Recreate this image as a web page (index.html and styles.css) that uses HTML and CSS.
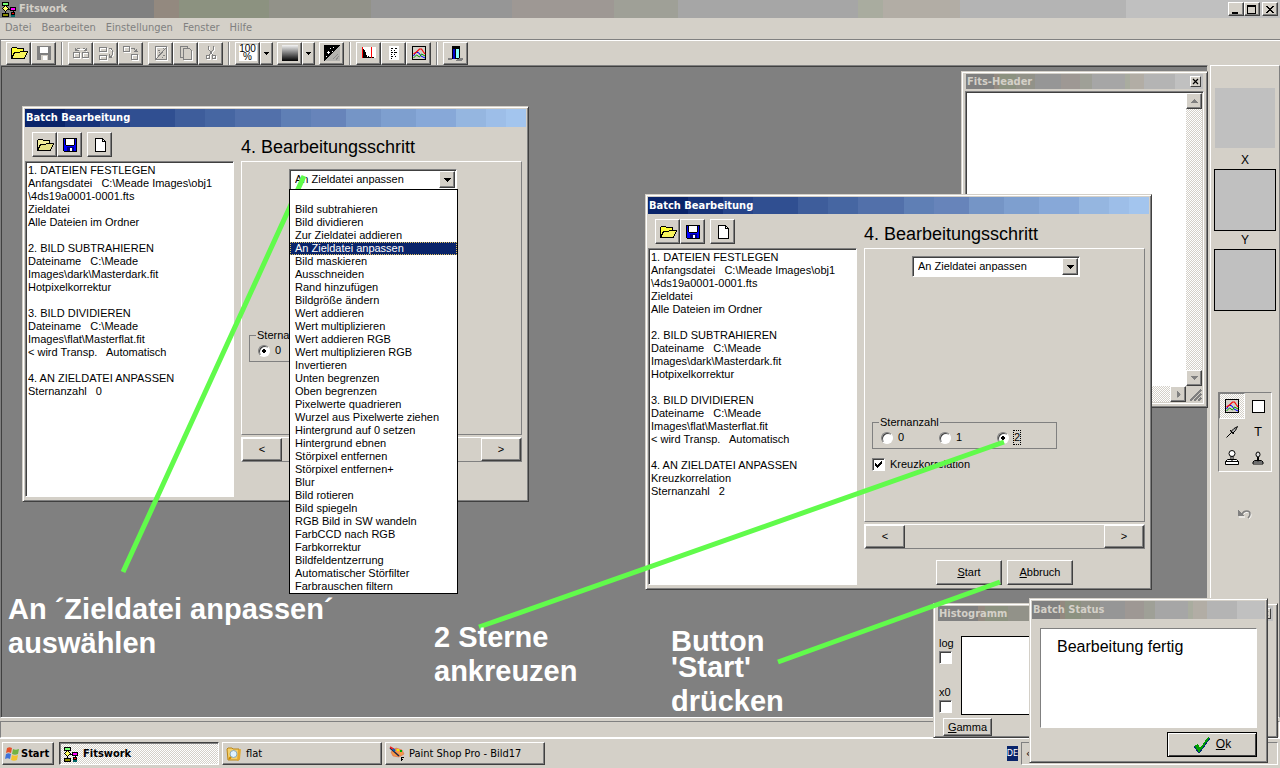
FILE: index.html
```html
<!DOCTYPE html>
<html lang="de">
<head>
<meta charset="utf-8">
<meta name="viewport" content="width=device-width, initial-scale=1">
<title>Fitswork</title>
<link rel="stylesheet" href="styles.css">
</head>
<body>
<svg class="defs" aria-hidden="true">
  <symbol id="app" viewBox="0 0 16 16">
    <path d="M4 3v10M5 8h8M12 8v6" stroke="#000" fill="none"/>
    <rect x="1.5" y="1" width="6" height="3" fill="#7f7" stroke="#000"/>
    <path d="M4.5 4.500l3 3-3 3-3-3z" fill="#ff6" stroke="#000"/>
    <rect x="1.500" y="12.500" width="6" height="3" fill="#880" stroke="#000"/>
    <rect x="9.500" y="6.500" width="5" height="3" fill="#f0f" stroke="#000"/>
    <rect x="10.500" y="11" width="3" height="2" fill="#f00" stroke="#000"/>
    <rect x="10" y="14" width="4" height="2" fill="#066"/>
  </symbol>
  <symbol id="open" viewBox="0 0 18 16">
    <path d="M1.500 13.500V3.500l1-1h4l1 1h6v3h3.500l-3 7z" fill="#ffff33" stroke="#000"/>
    <path d="M1.500 13.500l3-6h5l1-1h7l-3 7z" fill="#f8f45c" stroke="#000"/>
  </symbol>
  <symbol id="opendull" viewBox="0 0 18 16">
    <path d="M1.500 13.500V3.500l1-1h4l1 1h6v3h3.500l-3 7z" fill="#f2ee9a" stroke="#000"/>
    <path d="M1.500 13.500l3-6h5l1-1h7l-3 7z" fill="#e6e284" stroke="#000"/>
  </symbol>
  <symbol id="save" viewBox="0 0 16 16">
    <path d="M1.500 1.500h13v13h-12l-1-1z" fill="#00f" stroke="#000"/>
    <path d="M4 2h8v6H4z" fill="#fff"/><path d="M4 8.500h8M3.500 2v6M12.500 2v6" stroke="#000"/>
    <path d="M5 10h7v4H5z" fill="#000080"/><path d="M8 11h2v3H8z" fill="#fff"/>
  </symbol>
  <symbol id="savegray" viewBox="0 0 16 16">
    <path d="M1 1h14v14H1z" fill="#808080"/><path d="M4 2h8v6H4z" fill="#fff"/><path d="M5 10h7v5H5z" fill="#d4d0c8"/><path d="M7 11h4v4H7z" fill="#fff"/>
  </symbol>
  <symbol id="new" viewBox="0 0 16 16"><path d="M3.500 1.500h7l3 3v10h-10z" fill="#fff" stroke="#000"/><path d="M10.500 1.500v3h3" fill="none" stroke="#000"/></symbol>
  <symbol id="swap" viewBox="0 0 16 16"><g fill="none" stroke="#fff"><path d="M1.500 8.500h6v5h-6zM10.500 8.500h5v5h-5zM4 6l3-2h4l3 3"/></g><g fill="none" stroke="#808080"><path d="M.5 7.500h6v5h-6zM9.500 7.500h6v5h-6zM2.500 5.500l2-2h2M9.500 3.500h2l2 2M2.500 2.500v3h3M13.500 2.500v3h-3"/></g></symbol>
  <symbol id="stack" viewBox="0 0 16 16"><path d="M2.500 3.500h7v4h-7zM2.500 11.500h7v4h-7zM12 4l3 3v4l-3 2" fill="none" stroke="#fff"/><path d="M1.500 2.500h7v4h-7zM1.500 10.500h7v4h-7zM11 3.500h2l1.500 2v4l-2 2.500M11 12.500h3M11.500 12v-3" fill="none" stroke="#808080"/></symbol>
  <symbol id="move" viewBox="0 0 16 16"><path d="M1.500 2.500h6v5h-6zM9.500 10.500h6v5h-6z" fill="none" stroke="#fff"/><path d="M.5 1.500h6v5h-6zM8.500 9.500h6v5h-6zM8 3.500h3l2 3M11 6.500h4M13 4v3" fill="none" stroke="#808080"/></symbol>
  <symbol id="wand" viewBox="0 0 16 16"><path d="M3.500 2.500h11v13h-11z" fill="none" stroke="#fff"/><path d="M2.500 1.500h11v13h-11zM3 14L13 3M5 5.500h2M6 7.500h1M10 10.500h2M9 12.500h1M10 3.500h1" fill="none" stroke="#808080"/></symbol>
  <symbol id="copy" viewBox="0 0 16 16"><path d="M2.500 1.500h7v11h-7z" fill="#d4d0c8" stroke="#808080"/><path d="M6.500 4.500h6l2 2v9h-8z" fill="#d4d0c8" stroke="#fff"/><path d="M5.500 3.500h6l2 2v9h-8z" fill="#d4d0c8" stroke="#808080"/></symbol>
  <symbol id="cut" viewBox="0 0 16 16"><g fill="none" stroke="#fff" transform="translate(1 1)"><path d="M5.500 1v3l4 6M10.500 1v3l-4 6"/><circle cx="5" cy="12" r="2"/><circle cx="11" cy="12" r="2"/></g><g fill="none" stroke="#808080"><path d="M5.500 1v3l4 6M10.500 1v3l-4 6"/><circle cx="5" cy="12" r="2"/><circle cx="11" cy="12" r="2"/></g></symbol>
  <linearGradient id="ramp" x1="0" y1="0" x2="0" y2="1"><stop offset="0" stop-color="#f4f4f4"/><stop offset="1" stop-color="#000"/></linearGradient>
  <symbol id="gray" viewBox="0 0 16 16"><path d="M0 0h16v16H0z" fill="url(#ramp)"/></symbol>
  <symbol id="moon" viewBox="0 0 16 16"><path d="M0 0h16v16H0z" fill="#b4b3af"/><path d="M0 0h16L0 16z"/><path d="M9 14l5-5M12 15l3-4" stroke="#8c8c8c"/><path d="M3 7.500h3M4.500 6v3M6 3.500h1M9 2.500h1M8 6.500h1M2 11.500h1" stroke="#fff"/></symbol>
  <symbol id="histo" viewBox="0 0 16 16"><path d="M1 2h14v11H1z" fill="#fff"/><path d="M2 3v10h11v-1h-2l-1-1-1 1-2-1-1 1-1-4-1-2-1-1z"/><path d="M1.500 2v11M10.500 2v11" stroke="#f00"/></symbol>
  <symbol id="text" viewBox="0 0 16 16"><path d="M3 1h10v14H3z" fill="#fff"/><path d="M5 3.500h2m2 0h2M5 5.500h1m2 0h1M5 7.500h2m1 0h3M5 9.500h1m2 0h1M5 11.500h2m2 0h1M5 13.500h1" stroke="#000"/></symbol>
  <symbol id="curve" viewBox="0 0 16 16"><path d="M1.500 1.500h13v13h-13z" fill="#d4d0c8" stroke="#000" stroke-width="1.500"/><g fill="none" shape-rendering="geometricPrecision"><path d="M2.500 11l2.500-4 3 1 2 3 4 2" stroke="#00f"/><path d="M2.500 13l3-3 3 2 2-3 3.500 2" stroke="#090"/><path d="M2.500 9l3-2 3-3h2l2 3 1.500 2" stroke="#f00" stroke-width="1.200"/></g></symbol>
  <symbol id="exit" viewBox="0 0 16 16"><path d="M4 1h8v2H4z"/><path d="M4 3h8v11H4z"/><path d="M5 4h2v10H5z" fill="#00c"/><path d="M8 4h3v9H8z" fill="#8ff"/><path d="M0 13h4v2H0zM9 14l4-1 3 1-3 2H8z" fill="#808080"/></symbol>
  <symbol id="down" viewBox="0 0 7 4"><path d="M0 0h7v1H0zM1 1h5v1H1zM2 2h3v1H2zM3 3h1v1H3z" fill="currentColor"/></symbol>
  <symbol id="close" viewBox="0 0 8 7"><path d="M0 0h2v1h1v1h2V1h1V0h2v1H7v1H6v1H5v1h1v1h1v1h1v1H6V6H5V5H3v1H2v1H0V6h1V5h1V4h1V3H2V2H1V1H0z"/></symbol>
  <symbol id="closesmall" viewBox="0 0 7 7"><path d="M1 1l5 5M6 1L1 6" stroke="#000" stroke-width="1.200" shape-rendering="geometricPrecision"/></symbol>
  <symbol id="pen" viewBox="0 0 16 16"><g shape-rendering="geometricPrecision"><path d="M2.500 13.500l6-6" stroke="#000"/><path d="M7 7.500l3-3 2-1 1.500-1-1 2-1 2-3 3z" fill="#aaa" stroke="#000"/><path d="M6 6l4 4" stroke="#000"/></g></symbol>
  <symbol id="stamp" viewBox="0 0 16 16"><g fill="#fff" stroke="#000" shape-rendering="geometricPrecision"><path d="M7 6h2v4H7zM3.500 9.500h9l2 2v3h-13v-3z"/><circle cx="8" cy="3.500" r="3"/><path d="M1.500 11.500h13"/></g></symbol>
  <symbol id="stampsmall" viewBox="0 0 16 16"><g fill="#ddd" stroke="#000" shape-rendering="geometricPrecision"><path d="M7.500 7h1v4h-1zM4.500 10.500h7l1.500 1.500v2H3v-2z"/><ellipse cx="8" cy="4.500" rx="2" ry="2.500"/><path d="M3 12h10"/></g></symbol>
  <symbol id="undo" viewBox="0 0 16 12"><g fill="none" shape-rendering="geometricPrecision"><path d="M7 6c2-3 7-2 7 1 0 2-1 3-2 4" stroke="#fff"/><path d="M5 6c2-4 8-4 8 0 0 2-1 3-2 4" stroke="#808080" stroke-width="1.500"/><path d="M2 9h6" stroke="#fff"/></g><path d="M1 2v6h6z" fill="#808080"/></symbol>
  <symbol id="check" viewBox="0 0 9 8"><path d="M1 2v3l2 2 5-5V0L3 4z"/></symbol>
  <symbol id="flag" viewBox="0 0 16 16"><g shape-rendering="geometricPrecision"><path d="M3 2c2-1 3-1 5 0L7 7C5 6 4 6 2 7z" fill="#e4512b"/><path d="M9 3c2 1 3 1 6 0l-1 5c-2 1-4 1-6 0z" fill="#72b343"/><path d="M2 8c2-1 3-1 5 0l-1 5c-2-1-3-1-5 0z" fill="#3f72d8"/><path d="M8 9c2 1 4 1 6 0l-1 5c-2 1-4 1-6 0z" fill="#f4c32e"/></g></symbol>
  <symbol id="folder" viewBox="0 0 16 16"><g shape-rendering="geometricPrecision"><path d="M1 3l1-1h4l1 1h6v11H2z" fill="#f5d06a" stroke="#b98516"/><path d="M12 4l3-1-1 10-3 2z" fill="#e3a92f"/><circle cx="7.500" cy="8" r="3.500" fill="#dff3ff" stroke="#8ab"/><path d="M5 11l-2 2" stroke="#c80" stroke-width="2"/></g></symbol>
  <symbol id="paint" viewBox="0 0 16 16"><g shape-rendering="geometricPrecision"><path d="M2 6l5-4 6 2 2 4-5 3-6-1z" fill="#f49a4a" stroke="#d64" stroke-width=".6"/><path d="M8 3h2v2H8z" fill="#ee0"/><path d="M11 4h2v2h-2z" fill="#0a0"/><path d="M1 2l9 8" stroke="#224" stroke-width="1.500"/><path d="M1 1l5 3" stroke="#e22" stroke-width="1.500"/><path d="M4 3l2 2" stroke="#06c" stroke-width="2"/></g><path d="M12 11.500h3M12.500 11v4M12 13.500h2" fill="none" stroke="#000"/></symbol>
</svg>

<div class="desktop">
  <header class="titlebar gray main-title">
    <svg class="i16"><use href="#app"/></svg><h1>Fitswork</h1>
    <div class="caption-buttons">
      <button class="cap" aria-label="Minimieren"><svg viewBox="0 0 10 9"><path d="M1 7h6v2H1z"/></svg></button>
      <button class="cap" aria-label="Maximieren"><svg viewBox="0 0 10 9"><path d="M0 0h9v9H0zM1 2v6h7V2z" fill-rule="evenodd"/></svg></button>
      <button class="cap apart" aria-label="Schließen"><svg class="x"><use href="#close"/></svg></button>
    </div>
  </header>
  <nav class="menu"><a href="#">Datei</a><a href="#">Bearbeiten</a><a href="#">Einstellungen</a><a href="#">Fenster</a><a href="#">Hilfe</a></nav>
  <div class="toolbar">
    <button class="tool" aria-label="Öffnen"><svg class="i18"><use href="#open"/></svg></button><button class="tool" aria-label="Speichern"><svg class="i16"><use href="#savegray"/></svg></button>
    <i class="sep"></i>
    <button class="tool" aria-label="Tauschen"><svg class="i16"><use href="#swap"/></svg></button><button class="tool" aria-label="Stapeln"><svg class="i16"><use href="#stack"/></svg></button><button class="tool" aria-label="Verschieben"><svg class="i16"><use href="#move"/></svg></button>
    <i class="space wide"></i>
    <button class="tool" aria-label="Auswahl"><svg class="i16"><use href="#wand"/></svg></button><button class="tool" aria-label="Kopieren"><svg class="i16"><use href="#copy"/></svg></button><button class="tool" aria-label="Ausschneiden"><svg class="i16"><use href="#cut"/></svg></button>
    <i class="sep"></i>
    <button class="tool"><span class="percent">100<br>%</span></button><button class="tool narrow" aria-label="Zoomstufen"><svg class="tri tiny"><use href="#down"/></svg></button>
    <i class="space"></i>
    <button class="tool" aria-label="Graustufen"><svg class="i16"><use href="#gray"/></svg></button><button class="tool narrow" aria-label="Paletten"><svg class="tri tiny"><use href="#down"/></svg></button>
    <i class="space"></i>
    <button class="tool" aria-label="Kontrast"><svg class="i16"><use href="#moon"/></svg></button>
    <i class="sep"></i>
    <button class="tool" aria-label="Histogramm"><svg class="i16"><use href="#histo"/></svg></button><button class="tool" aria-label="Fits-Header"><svg class="i16"><use href="#text"/></svg></button><button class="tool" aria-label="Kurven"><svg class="i16"><use href="#curve"/></svg></button>
    <i class="sep"></i>
    <button class="tool" aria-label="Beenden"><svg class="i16"><use href="#exit"/></svg></button>
  </div>

  <main class="workspace">
    <div class="mdi"></div>
    <aside class="side">
      <div class="preview plain"></div>
      <span class="axis">X</span><div class="preview"></div>
      <span class="axis">Y</span><div class="preview"></div>
      <div class="palette">
        <button class="on" aria-label="Kurven"><svg class="i16"><use href="#curve"/></svg></button>
        <button aria-label="Rechteck"><svg class="i16" viewBox="0 0 16 16"><path d="M2.500 2.500h12v12h-12z" fill="#fff" stroke="#000"/></svg></button>
        <button aria-label="Pipette"><svg class="i16"><use href="#pen"/></svg></button>
        <button>T</button>
        <button aria-label="Stempel"><svg class="i16"><use href="#stamp"/></svg></button>
        <button aria-label="Kleiner Stempel"><svg class="i16"><use href="#stampsmall"/></svg></button>
      </div>
      <button class="undo" aria-label="Rückgängig"><svg><use href="#undo"/></svg></button>
    </aside>
  </main>
  <div class="status"><div></div></div>
  <footer class="taskbar">
    <button class="task start"><svg class="i16"><use href="#flag"/></svg><b>Start</b></button>
    <button class="task active"><svg class="i16"><use href="#app"/></svg><b>Fitswork</b></button>
    <button class="task"><svg class="i16"><use href="#folder"/></svg>flat</button>
    <button class="task"><svg class="i16"><use href="#paint"/></svg>Paint Shop Pro - Bild17</button>
    <span class="lang">DE</span><div class="tray">«</div>
  </footer>

  <section class="window fits" aria-label="Fits-Header">
    <div class="titlebar gray small"><h2>Fits-Header</h2><button class="mini" aria-label="Schließen"><svg><use href="#closesmall"/></svg></button></div>
    <div class="memo-frame">
      <div class="page"></div>
      <div class="vscroll"><button aria-label="Nach oben"><svg class="tri up"><use href="#down"/></svg></button><i></i><button aria-label="Nach unten"><svg class="tri"><use href="#down"/></svg></button></div>
      <div class="hscroll"><i></i><button aria-label="Nach rechts"><svg class="tri right"><use href="#down"/></svg></button></div>
      <svg class="grip" viewBox="0 0 16 16"><path d="M4 15L15 4M8 15l7-7M12 15l3-3" stroke="#808080" stroke-width="2"/></svg>
    </div>
  </section>

  <section class="window batch first" aria-label="Batch Bearbeitung">
    <div class="titlebar blue"><h2>Batch Bearbeitung</h2></div>
    <div class="batch-body">
      <div class="batch-tools"><button class="tool" aria-label="Öffnen"><svg class="i18"><use href="#opendull"/></svg></button><button class="tool" aria-label="Speichern"><svg class="i16"><use href="#save"/></svg></button><i class="space wide"></i><button class="tool" aria-label="Neu"><svg class="i16"><use href="#new"/></svg></button></div>
      <h3>4. Bearbeitungsschritt</h3>
      <textarea class="memo" readonly aria-label="Arbeitsschritte">1. DATEIEN FESTLEGEN
Anfangsdatei   C:\Meade Images\obj1
\4ds19a0001-0001.fts
Zieldatei
Alle Dateien im Ordner

2. BILD SUBTRAHIEREN
Dateiname   C:\Meade
Images\dark\Masterdark.fit
Hotpixelkorrektur

3. BILD DIVIDIEREN
Dateiname   C:\Meade
Images\flat\Masterflat.fit
&lt; wird Transp.   Automatisch

4. AN ZIELDATEI ANPASSEN
Sternanzahl   0</textarea>
      <div class="step">
        <div class="panel">
          <div class="combo"><select aria-label="Bearbeitungsschritt"><option>An Zieldatei anpassen</option></select><span class="drop"><svg class="tri"><use href="#down"/></svg></span>
            <ul class="options" role="listbox">
              <li></li><li>Bild subtrahieren</li><li>Bild dividieren</li><li>Zur Zieldatei addieren</li><li class="selected">An Zieldatei anpassen</li><li>Bild maskieren</li><li>Ausschneiden</li><li>Rand hinzufügen</li><li>Bildgröße ändern</li><li>Wert addieren</li><li>Wert multiplizieren</li><li>Wert addieren RGB</li><li>Wert multiplizieren RGB</li><li>Invertieren</li><li>Unten begrenzen</li><li>Oben begrenzen</li><li>Pixelwerte quadrieren</li><li>Wurzel aus Pixelwerte ziehen</li><li>Hintergrund auf 0 setzen</li><li>Hintergrund ebnen</li><li>Störpixel entfernen</li><li>Störpixel entfernen+</li><li>Blur</li><li>Bild rotieren</li><li>Bild spiegeln</li><li>RGB Bild in SW wandeln</li><li>FarbCCD nach RGB</li><li>Farbkorrektur</li><li>Bildfeldentzerrung</li><li>Automatischer Störfilter</li><li>Farbrauschen filtern</li>
            </ul>
          </div>
          <fieldset><legend>Sterna</legend><label><input type="radio" name="a" checked><span>0</span></label></fieldset>
        </div>
        <div class="stepper"><button aria-label="Zurück">&lt;</button><i></i><button aria-label="Weiter">&gt;</button></div>
      </div>
    </div>
  </section>

  <section class="window batch second" aria-label="Batch Bearbeitung">
    <div class="titlebar blue"><h2>Batch Bearbeitung</h2></div>
    <div class="batch-body">
      <div class="batch-tools"><button class="tool" aria-label="Öffnen"><svg class="i18"><use href="#open"/></svg></button><button class="tool" aria-label="Speichern"><svg class="i16"><use href="#save"/></svg></button><i class="space wide"></i><button class="tool" aria-label="Neu"><svg class="i16"><use href="#new"/></svg></button></div>
      <h3>4. Bearbeitungsschritt</h3>
      <textarea class="memo" readonly aria-label="Arbeitsschritte">1. DATEIEN FESTLEGEN
Anfangsdatei   C:\Meade Images\obj1
\4ds19a0001-0001.fts
Zieldatei
Alle Dateien im Ordner

2. BILD SUBTRAHIEREN
Dateiname   C:\Meade
Images\dark\Masterdark.fit
Hotpixelkorrektur

3. BILD DIVIDIEREN
Dateiname   C:\Meade
Images\flat\Masterflat.fit
&lt; wird Transp.   Automatisch

4. AN ZIELDATEI ANPASSEN
Kreuzkorrelation
Sternanzahl   2</textarea>
      <div class="step">
        <div class="panel">
          <div class="combo"><select aria-label="Bearbeitungsschritt"><option>An Zieldatei anpassen</option></select><span class="drop"><svg class="tri"><use href="#down"/></svg></span></div>
          <fieldset><legend>Sternanzahl</legend><label><input type="radio" name="b"><span>0</span></label><label><input type="radio" name="b"><span>1</span></label><label><input type="radio" name="b" checked><span class="focus">2</span></label></fieldset>
          <label class="kreuz"><span class="box"><input type="checkbox" checked><svg><use href="#check"/></svg></span>Kreuzkorrelation</label>
        </div>
        <div class="stepper"><button aria-label="Zurück">&lt;</button><i></i><button aria-label="Weiter">&gt;</button></div>
        <div class="actions"><button class="push"><u>S</u>tart</button><button class="push"><u>A</u>bbruch</button></div>
      </div>
    </div>
  </section>

  <section class="window histogram" aria-label="Histogramm">
    <div class="titlebar gray small"><h2>Histogramm</h2><button class="mini" aria-label="Schließen"><svg><use href="#closesmall"/></svg></button></div>
    <div class="hist-body">
      <div class="hist-options">
        <label>log<span class="box"><input type="checkbox"></span></label>
        <label>x0<span class="box"><input type="checkbox"></span></label>
      </div>
      <div class="plot"></div>
      <button class="push gamma"><u>G</u>amma</button>
    </div>
  </section>

  <section class="window message" aria-label="Batch Status">
    <div class="titlebar gray"><h2>Batch Status</h2></div>
    <div class="message-body">
      <p>Bearbeitung fertig</p>
      <button class="push ok"><svg viewBox="0 0 18 16"><path d="M1 9l4-2 2 4L15 0l2 1L7 15H5z" fill="#00a000"/><path d="M1 9l4 6h2L17 1" fill="none" stroke="#003070"/></svg><span><u>O</u>k</span></button>
    </div>
  </section>

  <svg class="pointers" aria-hidden="true"><path d="M304 176L123 572M1004 442L479 627M1000 582L778 662"/></svg>
  <p class="note n1">An ´Zieldatei anpassen´<br>auswählen</p>
  <p class="note n2">2 Sterne<br>ankreuzen</p>
  <p class="note n3"><span>Button</span>'Start'<br>drücken</p>
</div>
</body>
</html>
```
FILE: styles.css
```css
:root {
  --face: #d4d0c8;
  --shade: #808080;
  --dark: #404040;
  --hatch: repeating-conic-gradient(#fff 0 25%, #d4d0c8 0 50%) 0 0 / 2px 2px;
  --ui: "DejaVu Sans Condensed", "DejaVu Sans", sans-serif;
}
* { box-sizing: border-box; }
body { margin: 0; font: 11px/13px "Liberation Sans", sans-serif; color: #000; background: var(--face); }
h1, h2, h3, p, ul { margin: 0; padding: 0; }
button, select, textarea, input { font: inherit; color: inherit; margin: 0; padding: 0; border-radius: 0; }
svg { display: block; flex: none; shape-rendering: crispEdges; }
.defs { position: absolute; width: 0; height: 0; }
.i16 { width: 16px; height: 16px; }
.i18 { width: 18px; height: 16px; }
.tri { width: 7px; height: 4px; }
.tiny { width: 5px; height: 3px; }
.up { transform: rotate(180deg); }
.right { transform: rotate(-90deg); }

.desktop { position: relative; display: flex; flex-direction: column; min-height: 100vh; overflow: hidden; }

/* Title bars */
.titlebar { display: flex; align-items: center; height: 18px; padding: 0 2px 0 1px; }
.titlebar h1, .titlebar h2 { flex: 1; font: bold 11px/14px var(--ui); }
.gray { color: var(--face); background: linear-gradient(90deg, #808080 12%, #93897f 0 14%, #8c9280 0 21%, #929289 0 29%, #969696 0 40%, #9e9894 0 48%, #9fa097 0 53%, #a6a6a6 0 67%, #a9ac9f 0 69%, #b2ada5 0 75%, #b4b4b4 0 88%, #c0c0c0 0); }
.blue { color: #fff; background: linear-gradient(90deg, #0a246a 8%, #17337a 0 15%, #26448a 0 21%, #304f91 0 30%, #3e5d9b 0 36%, #4666a2 0 42%, #5270aa 0 51%, #5f7fb5 0 57%, #6784ba 0 64%, #7595c6 0 71%, #7e9fcf 0 78%, #87a8d8 0 86%, #95b6e0 0 92%, #9dbee8 0 96%, #a3c5ee 0); }
.main-title { gap: 2px; }
.caption-buttons { display: flex; }
.cap { width: 16px; height: 14px; display: grid; place-items: center; background: var(--face); border: 1px solid; border-color: #fff var(--dark) var(--dark) #fff; box-shadow: inset -1px -1px var(--shade); }
.cap svg { width: 10px; height: 9px; }
.cap svg.x { width: 8px; height: 7px; }
.apart { margin-left: 2px; }

.menu { display: flex; gap: 10px; padding: 3px 5px 4px; font: 11px/14px var(--ui); }
.menu a { color: var(--shade); text-decoration: none; }

.toolbar { display: flex; align-items: center; height: 26px; padding: 1px 5px 0; border-top: 1px solid var(--shade); box-shadow: inset 0 1px #fff; border-left: 1px solid var(--shade); }
.tool { display: grid; place-items: center; width: 25px; height: 23px; background: var(--face); border: 1px solid; border-color: #fff var(--dark) var(--dark) #fff; box-shadow: inset -1px -1px var(--shade); }
.narrow { width: 13px; }
.sep { width: 2px; height: 23px; margin: 0 5px; border-left: 1px solid var(--shade); border-right: 1px solid #fff; }
.space { width: 4px; }
.wide { width: 5px; }
.percent { width: 18px; font-size: 10px; line-height: 8px; background: #fff; }

.workspace { flex: 1; display: flex; gap: 2px; }
.mdi { flex: 1; background: var(--shade); border: 1px solid; border-color: var(--shade) var(--face) #fff var(--shade); box-shadow: inset 1px 1px var(--dark); }
.side { width: 70px; display: flex; flex-direction: column; align-items: center; padding-top: 21px; border: 1px solid #fff; border-right-color: var(--shade); }
.preview { width: 62px; height: 62px; background: #c0c0c0; border: 1px solid #000; }
.plain { border-color: var(--face); margin-bottom: 2px; }
.axis { padding: 3px 0 2px; font-size: 12px; }
.palette { display: grid; grid-template-columns: 26px 26px; grid-auto-rows: 26px; margin-top: 81px; border: 1px solid; border-color: var(--shade) #fff #fff var(--shade); }
.palette button { display: grid; place-items: center; background: none; border: 0; font: 13px/14px var(--ui); }
.palette .on { background: var(--hatch); border: 1px solid; border-color: var(--shade) #fff #fff var(--shade); }
.undo { margin-top: 36px; background: none; border: 0; }
.undo svg { width: 16px; height: 12px; }

.status { padding: 3px 0 0; }
.status div { height: 17px; border: 1px solid; border-color: var(--shade) #fff #fff var(--shade); }
.taskbar { display: flex; align-items: center; gap: 3px; height: 30px; padding: 0 2px; border-top: 1px solid #fff; font-family: var(--ui); }
.task { display: flex; align-items: center; gap: 4px; width: 160px; height: 23px; padding: 0 3px; background: var(--face); border: 1px solid; border-color: #fff var(--dark) var(--dark) #fff; box-shadow: inset -1px -1px var(--shade); font-family: var(--ui); }
.start { width: 52px; gap: 1px; padding: 0 1px; margin-right: 2px; }
.active { background: var(--hatch); border-color: var(--dark) #fff #fff var(--dark); box-shadow: inset 1px 1px var(--shade); }
.lang { margin-left: auto; padding: 1px 0; color: #fff; background: #0a246a; font-size: 9px; }
.tray { width: 257px; height: 23px; padding: 4px; border: 1px solid; border-color: var(--shade) #fff #fff var(--shade); }

/* Floating windows */
.window { position: absolute; padding: 1px; background: var(--face); border: 1px solid; border-color: var(--face) var(--dark) var(--dark) var(--face); box-shadow: inset 1px 1px #fff, inset -1px -1px var(--shade); }
.window .titlebar { margin: 1px; }
.window .small { height: 15px; margin-top: 0; }
.mini { display: grid; place-items: center; width: 11px; height: 11px; background: var(--face); border: 1px solid; border-color: #fff var(--dark) var(--dark) #fff; }
.mini svg { width: 7px; height: 7px; }

.fits { left: 961px; top: 71px; width: 247px; height: 337px; display: flex; flex-direction: column; padding: 2px 3px 3px; }
.memo-frame { flex: 1; margin-top: 1px; display: grid; grid-template: 1fr 16px / 1fr 16px; border: 1px solid; border-color: var(--shade) #fff #fff var(--shade); box-shadow: inset 1px 1px var(--dark); padding: 1px; }
.page { background: #fff; }
.vscroll, .hscroll { display: flex; background: var(--hatch); color: var(--shade); }
.vscroll { flex-direction: column; }
.vscroll i, .hscroll i { flex: 1; }
.vscroll button, .hscroll button { display: grid; place-items: center; width: 16px; height: 16px; background: var(--face); border: 1px solid; border-color: #fff var(--dark) var(--dark) #fff; box-shadow: inset -1px -1px var(--shade); }
.grip { width: 16px; height: 16px; }

.batch { width: 507px; height: 396px; display: flex; flex-direction: column; }
.first { left: 22px; top: 106px; }
.second { left: 645px; top: 194px; }
.batch-body { flex: 1; display: grid; grid-template: 33px 1fr / 209px 1fr; column-gap: 7px; padding: 0 5px 3px 1px; }
.batch-tools { display: flex; align-items: center; padding: 0 7px; }
.batch-tools .tool { height: 25px; }
h3 { align-self: center; padding-top: 4px; font: 18px/20px "Liberation Sans", sans-serif; }
.memo { width: 100%; height: 100%; resize: none; overflow: hidden; outline: 0; padding: 2px; border: 1px solid; border-color: var(--shade) #fff #fff var(--shade); box-shadow: inset 1px 1px var(--dark); background: #fff; white-space: pre-wrap; }
.step { display: flex; flex-direction: column; }
.panel { height: 274px; padding: 7px; border: 1px solid; border-color: #fff var(--shade) var(--shade) #fff; }
.combo { position: relative; width: 168px; height: 21px; margin: 0 0 0 40px; display: flex; background: #fff; border: 1px solid; border-color: var(--shade) #fff #fff var(--shade); box-shadow: inset 1px 1px var(--dark); padding: 1px; }
.combo select { flex: 1; appearance: none; border: 0; background: none; padding-left: 4px; outline: 0; }
.drop { display: grid; place-items: center; width: 16px; background: var(--face); border: 1px solid; border-color: #fff var(--dark) var(--dark) #fff; box-shadow: inset -1px -1px var(--shade); }
.options { position: absolute; z-index: 5; top: 19px; left: -1px; width: 169px; list-style: none; background: #fff; border: 1px solid #000; }
.options li { height: 13px; padding-left: 5px; }
.options .selected { color: #fff; background: #0a246a; outline: 1px dotted #e0c060; outline-offset: -1px; }
fieldset { display: flex; gap: 34px; width: 185px; height: 33px; margin: 139px 0 0; padding: 1px 8px; border: 1px solid var(--shade); }
legend { padding: 0 1px; margin-left: -2px; }
fieldset label { display: flex; align-items: center; gap: 5px; height: 15px; width: 24px; }
input[type="radio"] { appearance: none; flex: none; width: 12px; height: 12px; border: 1px solid; border-color: var(--shade) #fff #fff var(--shade); border-radius: 50%; background: #fff; box-shadow: inset 1px 1px var(--dark); }
input[type="radio"]:checked { background: radial-gradient(circle, #000 0 2px, #fff 2px); }
.focus { outline: 1px dotted #000; }
.kreuz { display: flex; align-items: center; gap: 5px; margin-top: 9px; }
.box { position: relative; display: block; width: 13px; height: 13px; }
.box input { display: block; appearance: none; width: 13px; height: 13px; background: #fff; border: 1px solid; border-color: var(--shade) #fff #fff var(--shade); box-shadow: inset 1px 1px var(--dark); }
.box svg { position: absolute; left: 2px; top: 3px; width: 9px; height: 8px; }
.stepper { display: flex; height: 25px; margin-top: 2px; border: 1px solid; border-color: #fff var(--shade) var(--shade) #fff; }
.stepper i { flex: 1; }
.stepper button, .push { background: var(--face); border: 1px solid; border-color: #fff var(--dark) var(--dark) #fff; box-shadow: inset -1px -1px var(--shade); }
.stepper button { width: 40px; font-size: 11px; }
.actions { display: flex; gap: 5px; padding: 11px 0 0 72px; }
.actions .push { width: 66px; height: 25px; }

.histogram { left: 933px; top: 603px; width: 345px; height: 135px; padding: 2px 3px; }
.hist-body { display: grid; grid-template: 79px 1fr / 22px 1fr; gap: 3px 0; padding: 14px 8px 0 2px; }
.hist-options { display: flex; flex-direction: column; justify-content: space-between; padding: 1px 0 2px; }
.hist-options label { display: grid; gap: 1px; }
.plot { background: #fff; border: 1px solid #000; }
.gamma { grid-column: 1 / -1; width: 49px; height: 18px; margin-left: 4px; }

.message { left: 1029px; top: 598px; width: 239px; height: 165px; }
.message-body { display: flex; flex-direction: column; align-items: flex-end; gap: 4px; padding: 8px 9px 0; }
.message p { align-self: stretch; height: 100px; padding: 9px 16px; background: #fff; border: 1px solid; border-color: var(--shade) #fff #fff var(--shade); font-size: 16px; line-height: 18px; }
.ok { display: flex; align-items: center; justify-content: center; gap: 5px; width: 90px; height: 25px; border: 1px solid #000; box-shadow: inset 1px 1px #fff, inset -1px -1px var(--dark); font-size: 12px; }
.ok svg { width: 18px; height: 16px; }

/* Annotations */
.pointers { position: absolute; inset: 0; width: 100%; height: 100%; pointer-events: none; shape-rendering: auto; }
.pointers path { stroke: #61fb4b; stroke-width: 5; fill: none; }
.note { position: absolute; color: #fff; font: bold 29px/34px "Liberation Sans", sans-serif; white-space: nowrap; }
.n1 { left: 8px; top: 592px; }
.n2 { left: 434px; top: 620px; }
.n3 { left: 671px; top: 624px; }
.n3 span { display: block; margin-bottom: -8px; }
```
